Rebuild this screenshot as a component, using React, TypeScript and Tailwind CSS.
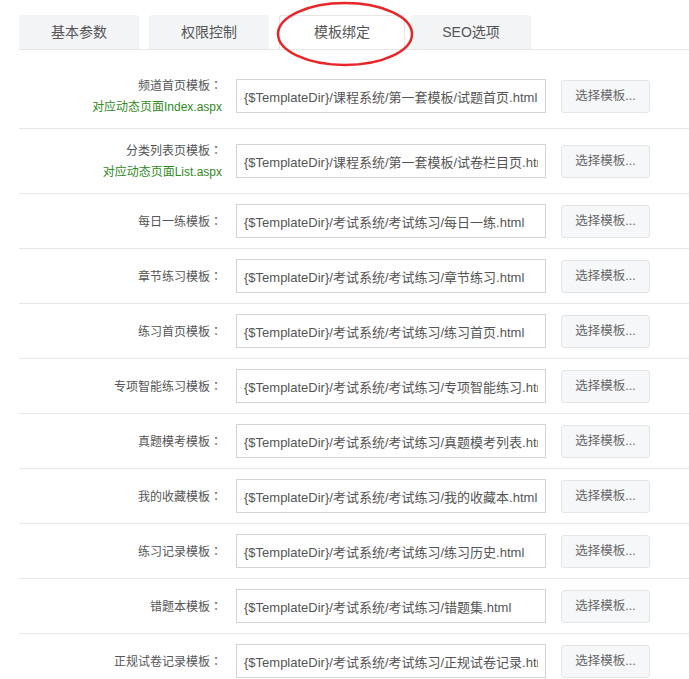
import React from 'react';

const tabs = ['基本参数', '权限控制', '模板绑定', 'SEO选项'];

interface Row {
  label: string;
  note?: string;
  value: string;
}

const rows: Row[] = [
  { label: '频道首页模板', note: '对应动态页面Index.aspx', value: '{$TemplateDir}/课程系统/第一套模板/试题首页.html' },
  { label: '分类列表页模板', note: '对应动态页面List.aspx', value: '{$TemplateDir}/课程系统/第一套模板/试卷栏目页.html' },
  { label: '每日一练模板', value: '{$TemplateDir}/考试系统/考试练习/每日一练.html' },
  { label: '章节练习模板', value: '{$TemplateDir}/考试系统/考试练习/章节练习.html' },
  { label: '练习首页模板', value: '{$TemplateDir}/考试系统/考试练习/练习首页.html' },
  { label: '专项智能练习模板', value: '{$TemplateDir}/考试系统/考试练习/专项智能练习.html' },
  { label: '真题模考模板', value: '{$TemplateDir}/考试系统/考试练习/真题模考列表.html' },
  { label: '我的收藏模板', value: '{$TemplateDir}/考试系统/考试练习/我的收藏本.html' },
  { label: '练习记录模板', value: '{$TemplateDir}/考试系统/考试练习/练习历史.html' },
  { label: '错题本模板', value: '{$TemplateDir}/考试系统/考试练习/错题集.html' },
  { label: '正规试卷记录模板', value: '{$TemplateDir}/考试系统/考试练习/正规试卷记录.html' },
];

const font = { fontFamily: '"Liberation Sans", "Noto Sans CJK SC", sans-serif' };
// centred full-width colon
const colonFont = { fontFamily: '"Noto Sans CJK JP", sans-serif' };

export default function App() {
  return (
    <div className="relative w-[689px] h-[679px] overflow-hidden bg-white text-[#555]" style={font}>
      {/* Tab bar */}
      <div className="ml-[19px] pt-[15px] flex border-b border-[#e6e6e6]">
        {tabs.map((t, i) => (
          <div
            key={t}
            className={
              i === 2
                ? 'w-[126px] h-[34px] mr-[6px] -mb-px flex items-center justify-center text-[14px] bg-white border border-b-0 border-[#e6e6e6] rounded-t-[3px]'
                : 'w-[120px] h-[34px] mr-[10px] flex items-center justify-center text-[14px] bg-[#f3f4f6] rounded-t-[3px]'
            }
          >
            {t}
          </div>
        ))}
      </div>

      {/* Form rows */}
      <div className="ml-[19px] pt-[14px]">
        {rows.map((r) => (
          <div key={r.label} className="flex items-center py-[10px] border-b border-[#e8e8e8]">
            <div className="w-[203px] text-right text-[12px] leading-[22px]">
              <div className="h-[22px]">
                {r.label}
                <span style={colonFont}>：</span>
              </div>
              {r.note && <div className="h-[22px] text-[#2f8a1e]">{r.note}</div>}
            </div>
            <input
              readOnly
              value={r.value}
              className="ml-[14px] w-[310px] h-[34px] px-[7px] border border-[#d2d4d6] text-[13px] text-[#555] outline-none bg-white"
              style={font}
            />
            <button
              className="ml-[15px] w-[89px] h-[33px] border border-[#e3e6e8] bg-[#f5f7f8] rounded-[3px] text-[12.5px] text-[#666]"
              style={font}
            >
              选择模板...
            </button>
          </div>
        ))}
      </div>

      {/* Hand-drawn highlight */}
      <svg className="absolute left-0 top-0 pointer-events-none" width="689" height="80">
        <ellipse cx="345" cy="34" rx="67" ry="31" fill="none" stroke="#e8262a" strokeWidth="2.5" />
      </svg>
    </div>
  );
}
